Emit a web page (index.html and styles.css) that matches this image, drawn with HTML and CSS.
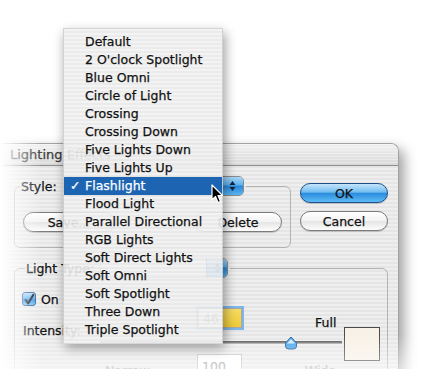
FILE: index.html
```html
<!DOCTYPE html>
<html lang="en">
<head>
    <meta charset="UTF-8">
    <title>Lighting Effects</title>
    <link rel="stylesheet" href="styles.css">
</head>
<body>
<div class="desk">
    <div class="dialog">
        <div class="titlebar"><span class="title">Lighting Effects</span></div>
        <div class="dialog-body">
            <fieldset class="group style-group">
                <legend class="group-label">
                    <span>Style:</span>
                    <span class="popup style-popup">
                        <span class="popup-text"></span>
                        <span class="popup-cap"><svg width="7" height="12" viewBox="0 0 7 12"><path d="M3.5 1 L6.5 5 L0.5 5 Z M3.5 11 L6.5 7 L0.5 7 Z" fill="#10283f"/></svg></span>
                    </span>
                </legend>
                <div class="btn-row">
                    <button class="btn save-btn">Save...</button>
                    <button class="btn delete-btn">Delete</button>
                </div>
            </fieldset>

            <div class="actions">
                <button class="btn btn-default">OK</button>
                <button class="btn">Cancel</button>
            </div>

            <fieldset class="group light-group">
                <legend class="group-label">
                    <span>Light Type:</span>
                    <span class="popup light-popup">
                        <span class="popup-text"></span>
                        <span class="popup-cap"><svg width="7" height="12" viewBox="0 0 7 12"><path d="M3.5 1 L6.5 5 L0.5 5 Z M3.5 11 L6.5 7 L0.5 7 Z" fill="#10283f"/></svg></span>
                    </span>
                </legend>
                <label class="check">
                    <span class="checkbox"><svg width="14" height="14" viewBox="0 0 14 14"><path d="M3 7 L6 11 L12 1" fill="none" stroke="#0d1a2a" stroke-width="2.4" stroke-linecap="round" stroke-linejoin="round"/></svg></span>
                    On
                </label>
                <div class="intensity">
                    <span class="int-label">Intensity:</span>
                    <span class="field value-field"><span class="field-text">46</span><span class="field-sel"></span></span>
                    <span class="end-label">Full</span>
                    <div class="slider">
                        <div class="track"></div>
                        <svg class="thumb" width="14" height="14" viewBox="0 0 14 14"><path d="M7 1 L12.5 7 L12.5 10 Q12.5 13 9.5 13 L4.5 13 Q1.5 13 1.5 10 L1.5 7 Z" fill="#4aa6ea" stroke="#1f5b94" stroke-width="1"/><path d="M7 3 L11 7.5 L3 7.5 Z" fill="#cfe9fb"/></svg>
                    </div>
                    <span class="swatch"></span>
                    <span class="dim-label narrow">Narrow</span>
                    <span class="field dim-field">100</span>
                    <span class="dim-label wide">Wide</span>
                </div>
            </fieldset>
        </div>
    </div>

    <ul class="menu">
        <li>Default</li>
        <li>2 O'clock Spotlight</li>
        <li>Blue Omni</li>
        <li>Circle of Light</li>
        <li>Crossing</li>
        <li>Crossing Down</li>
        <li>Five Lights Down</li>
        <li>Five Lights Up</li>
        <li class="selected"><span class="tick">✓</span>Flashlight</li>
        <li>Flood Light</li>
        <li>Parallel Directional</li>
        <li>RGB Lights</li>
        <li>Soft Direct Lights</li>
        <li>Soft Omni</li>
        <li>Soft Spotlight</li>
        <li>Three Down</li>
        <li>Triple Spotlight</li>
    </ul>

    <svg class="cursor" width="13" height="20" viewBox="0 0 13 20"><path d="M1 1 L1 16 L4.5 12.5 L7 18.5 L9.5 17.5 L7 11.5 L11.5 11.5 Z" fill="#000" stroke="#fff" stroke-width="1.2" stroke-linejoin="round"/></svg>

    <div class="fade"></div>
</div>
</body>
</html>
```

FILE: styles.css
```css
body {
    margin: 0;
    background: #fff;
    font-family: "DejaVu Sans", "Liberation Sans", sans-serif;
    font-size: 12.5px;
    color: #111;
    -webkit-text-stroke: 0.25px currentColor;
}
.desk {
    position: relative;
    width: 425px;
    height: 369px;
    overflow: hidden;
}

/* dialog window */
.dialog {
    position: absolute;
    left: -20px;
    top: 143px;
    width: 419px;
    height: 260px;
    border: 1px solid #a2a2a2;
    border-bottom: none;
    border-radius: 8px 8px 0 0;
    box-sizing: border-box;
    background: repeating-linear-gradient(to bottom, #eeeeee 0 2px, #e5e5e5 2px 4px);
    box-shadow: 5px 6px 13px rgba(0, 0, 0, 0.38);
}
.titlebar {
    height: 21px;
    border-bottom: 1px solid #8e8e8e;
    border-radius: 7px 7px 0 0;
    background:
        repeating-linear-gradient(to bottom, rgba(255,255,255,0.35) 0 1px, rgba(255,255,255,0) 1px 3px),
        linear-gradient(#f0f0f0, #d9d9d9);
    display: flex;
    align-items: center;
    padding-left: 29px;
}
.title {
    color: #3a3a3a;
    font-size: 13px;
}
.dialog-body {
    display: grid;
    grid-template-columns: 277px 88px;
    column-gap: 9px;
    align-items: start;
    padding-left: 33px;
}

/* group boxes */
.group {
    box-sizing: border-box;
    min-width: 0;
    margin: 0;
    border: 1px solid #b3b3b3;
    border-radius: 6px;
    padding: 0 8px;
}
.group-label {
    display: flex;
    align-items: center;
    gap: 6px;
    padding: 0 2px 0 1px;
    margin-left: -3px;
}
.style-group {
    margin-top: 10px;
    height: 72px;
}
.light-group {
    grid-column: 1 / -1;
    margin-top: 10px;
    height: 130px;
    padding-right: 7px;
}
.light-group .group-label {
    margin-left: 2px;
}

.popup {
    display: flex;
    height: 20px;
    box-sizing: border-box;
    border: 1px solid #8b8b8b;
    border-radius: 5px;
    background: linear-gradient(#ffffff, #f1f1f1 50%, #e6e6e6 50%, #fbfbfb);
    overflow: hidden;
}
.style-popup { width: 181px; }
.light-popup { width: 128px; }
.popup-text {
    flex: 1;
}
.popup-cap {
    width: 20px;
    display: flex;
    align-items: center;
    justify-content: center;
    border-left: 1px solid #245f9c;
    background: linear-gradient(#a9d6f8, #5bb0ef 45%, #2a86d8 50%, #58b6f3);
}

/* aqua buttons */
.btn {
    font: inherit;
    color: #111;
    height: 20px;
    line-height: 17px;
    padding: 0;
    border: 1px solid #7b7b7b;
    border-radius: 10px;
    background: linear-gradient(#ffffff, #f3f3f3 50%, #e4e4e4 50%, #fdfdfd);
    box-shadow: 0 1px 1px rgba(0, 0, 0, 0.18);
}
.btn-default {
    border-color: #1f4f89;
    background: linear-gradient(#c6e5fb, #72bdf1 45%, #2b8cdc 52%, #5cbcf6);
}
.btn-row {
    display: flex;
    justify-content: space-between;
    margin-top: 16px;
}
.save-btn { width: 92px; }
.delete-btn { width: 88px; }
.actions {
    display: flex;
    flex-direction: column;
    gap: 8px;
    margin-top: 17px;
}

/* light type contents */
.check {
    display: flex;
    align-items: center;
    gap: 5px;
    margin: 14px 0 0 -1px;
    height: 14px;
}
.checkbox {
    width: 14px;
    height: 14px;
    box-sizing: border-box;
    border: 1px solid #2a5d98;
    border-radius: 3px;
    background: linear-gradient(#b4dcf9, #4ca6ea 50%, #2f8ddc 55%, #6cc2f6);
    display: flex;
}
.intensity {
    display: grid;
    grid-template-columns: 175px 44px 73px 27px 2px 36px;
    grid-template-rows: 20px 8px 14px 4px 24px;
    margin-top: 2px;
}
.int-label {
    grid-row: 1 / 3;
    grid-column: 1;
    align-self: end;
    line-height: 14px;
    margin-bottom: -2px;
}
.field {
    box-sizing: border-box;
    border: 1px solid #a8a8a8;
    background: #fff;
    display: flex;
    align-items: center;
}
.value-field {
    grid-row: 1;
    grid-column: 2;
    box-shadow: 0 0 0 2px #7fb6e9;
}
.field-text {
    color: #777;
    padding-left: 4px;
    flex: 1;
}
.field-sel {
    width: 18px;
    align-self: stretch;
    background: linear-gradient(#f7dc62, #f0cb36);
}
.end-label {
    grid-row: 1;
    grid-column: 4;
    align-self: end;
    line-height: 12px;
    margin-bottom: -1px;
}
.slider {
    grid-row: 3;
    grid-column: 1 / 5;
    margin-left: 77px;
    position: relative;
}
.track {
    margin-top: 5px;
    height: 3px;
    background: linear-gradient(#555, #7a7a7a 60%, #cfcfcf);
}
.thumb {
    position: absolute;
    left: 184px;
    top: 0;
}
.swatch {
    grid-row: 2 / 6;
    grid-column: 6;
    align-self: start;
    height: 34px;
    margin-top: -1px;
    box-sizing: border-box;
    border: 1px solid #4a4a4a;
    background: #f8f1e7;
}
.dim-label {
    grid-row: 5;
    color: #a9a9a9;
    align-self: end;
    line-height: 14px;
}
.narrow {
    grid-column: 1;
    margin-left: 82px;
}
.wide {
    grid-column: 3 / 5;
    justify-self: end;
    margin-right: 6px;
}
.dim-field {
    grid-row: 5;
    grid-column: 2;
    margin-left: -1px;
    padding-left: 4px;
    color: #9a9a9a;
    border-color: #c2c2c2;
}

/* pop-up menu */
.menu {
    position: absolute;
    left: 63px;
    top: 28px;
    width: 160px;
    margin: 0;
    padding: 4px 0;
    list-style: none;
    box-sizing: border-box;
    background: repeating-linear-gradient(to bottom, rgba(242,242,242,0.91) 0 2px, rgba(233,233,233,0.91) 2px 4px);
    border: 1px solid rgba(0, 0, 0, 0.12);
    box-shadow: 2px 5px 11px rgba(0, 0, 0, 0.4);
}
.menu li {
    height: 18px;
    line-height: 18px;
    padding-left: 21px;
    white-space: nowrap;
    position: relative;
}
.menu li.selected {
    background: #1d65b2;
    color: #fff;
}
.tick {
    position: absolute;
    left: 6px;
}

.cursor {
    position: absolute;
    left: 211px;
    top: 184px;
}

/* soft white edge of the shot */
.fade {
    position: absolute;
    inset: 0;
    pointer-events: none;
    background:
        linear-gradient(to right, #fff 0, rgba(255,255,255,0.8) 8px, rgba(255,255,255,0) 42px),
        linear-gradient(to top, rgba(255,255,255,0.55) 0, rgba(255,255,255,0) 35px);
}
```
